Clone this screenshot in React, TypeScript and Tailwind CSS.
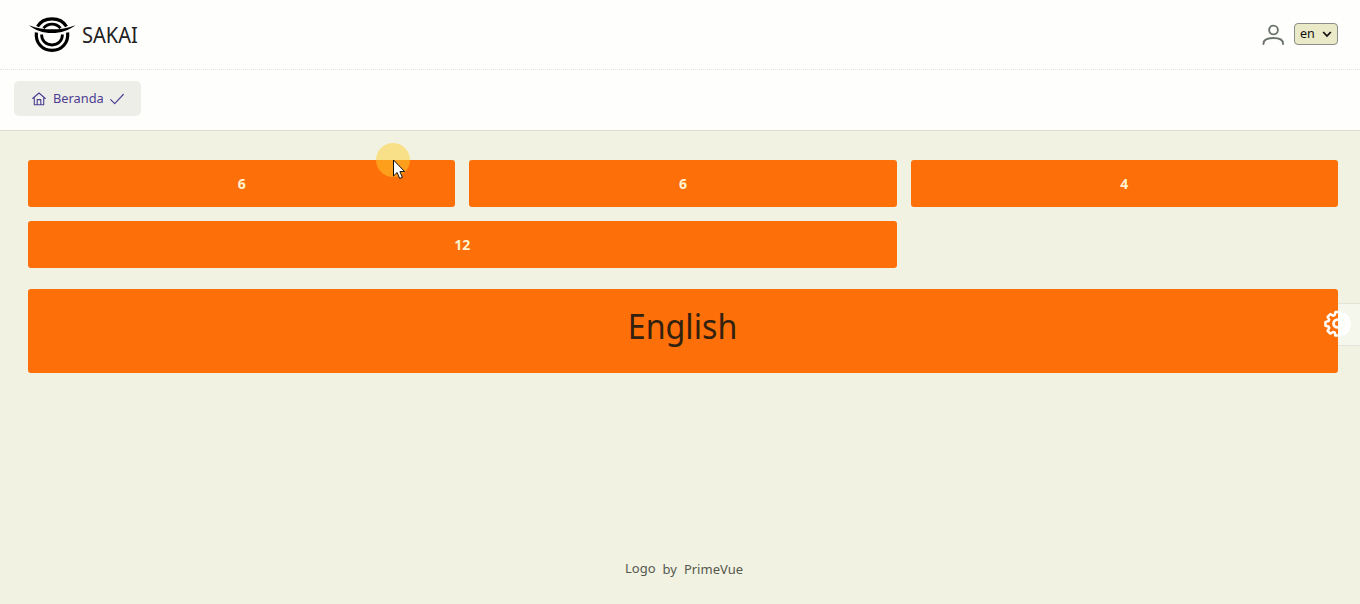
import React from "react";

const Logo = () => (
  <svg width="47" height="36" viewBox="0 0 47 36" fill="none" stroke="#000" className="shrink-0">
    <path d="M8.500 9.500C11.300 4.700 16.700 1.800 23 1.800S34.700 4.700 37.500 9.500" strokeWidth="3.200" />
    <path d="M14.500 11.200C16.800 8.500 19.700 7.200 23 7.200s6.200 1.300 8.500 4" strokeWidth="2.800" />
    <path d="M7.400 15.500C6.200 25.800 13.200 33.400 23 33.400s16.800-7.600 15.600-17.900" strokeWidth="3.200" />
    <path d="M12.600 17.500C12.500 23.800 17 28 23 28s10.500-4.200 10.400-10.500" strokeWidth="2.800" />
    <path d="M0 8.200C8 11.200 15 12.300 23 12.300s15-1.100 23.500-4.100C40 13.200 32 16.100 23 16.100S6 13.200 0 8.200Z" fill="#000" stroke="none" />
  </svg>
);

const UserIcon = () => (
  <svg width="22" height="22" viewBox="0 0 22 22" fill="none" stroke="#6c756d" strokeWidth="1.900" strokeLinecap="round">
    <circle cx="11.500" cy="6" r="4.400" />
    <path d="M1.500 20v-.5C1.500 15.800 5.300 14 11.500 14s9.500 1.800 9.500 5.500v.5" />
  </svg>
);

const HomeIcon = () => (
  <svg width="14" height="14" viewBox="0 0 14 14" fill="none" stroke="#4b3d91" strokeWidth="1.100" strokeLinecap="round" strokeLinejoin="round">
    <path d="M.7 6.500 7 1l6.300 5.500M2.300 5.500v7.300h9.400V5.500M5.200 12.500V7.600h3.600v4.900" />
  </svg>
);

const CheckIcon = () => (
  <svg width="14" height="14" viewBox="0 0 14 14" fill="none" stroke="#4b3d91" strokeWidth="1.200" strokeLinecap="round" strokeLinejoin="round">
    <path d="m.7 7.600 4 4L13.300 2.500" />
  </svg>
);

const CogIcon = () => (
  <svg width="27" height="27" viewBox="0 0 24 24" fill="none" stroke="#fff" strokeWidth="2.500" strokeLinejoin="round">
    <path d="M10 1.500h4l.7 3 1.600.7 2.700-1.600 2.800 2.800-1.600 2.700.7 1.600 3 .7v4l-3 .7-.7 1.600 1.600 2.700-2.800 2.800-2.700-1.600-1.600.7-.7 3h-4l-.7-3-1.600-.7L5 23.200l-2.800-2.800 1.600-2.700-.7-1.600-3-.7v-4l3-.7.7-1.600L2.200 6.400 5 3.600l2.700 1.600 1.600-.7Z" transform="translate(1.200 .5) scale(.9 .88)" />
    <circle cx="12" cy="12" r="3.500" />
  </svg>
);

const tile = "flex h-[47px] items-center justify-center rounded-[3px] bg-[#fd6f08] text-[14px] font-bold text-[#fff3d0]";

export default function App() {
  return (
    <div className="relative flex h-[604px] w-full flex-col overflow-hidden bg-[#f1f2e2] font-['Noto_Sans','Open_Sans',sans-serif] text-[#55584f]">
      <header className="flex h-[70px] shrink-0 items-center justify-between border-b border-dotted border-[#dfe2e0] bg-[#fefefc] pr-[22px] pl-[29px]">
        <div className="flex items-center gap-[6px]">
          <Logo />
          <span className="mt-px origin-left scale-x-[0.955] text-[21px] leading-[30px] text-[#222]">SAKAI</span>
        </div>
        <div className="flex items-center gap-[10px]">
          <UserIcon />
          <button className="mb-[2px] flex h-[22px] w-[44px] items-center justify-between rounded-[4px] border border-[#8b8c8c] bg-[#eaeac8] px-[5px] text-[12.500px] text-[#111]">
            <span className="pt-[2px] leading-none">en</span>
            <svg width="10" height="8" viewBox="0 0 10 8" fill="none" stroke="#111" strokeWidth="1.800">
              <path d="m1.200 2 3.800 4L8.800 2" />
            </svg>
          </button>
        </div>
      </header>

      <nav className="flex h-[61px] shrink-0 items-start border-b border-[#d9dccc] bg-[#fefefc] pt-[11px] pl-[14px]">
        <a className="flex h-[35px] w-[127px] items-center rounded-[5px] bg-[#eeeee8] pl-[18px] text-[13px] text-[#4b3d91]">
          <HomeIcon />
          <span className="ml-[7px] w-[50px] pt-px whitespace-nowrap"><span className="inline-block origin-left scale-x-[0.985]">Beranda</span></span>
          <span className="ml-[7px]"><CheckIcon /></span>
        </a>
      </nav>

      <main className="flex flex-1 flex-col pt-[29px] pr-[22px] pl-[28px]">
        <div className="grid grid-cols-3 gap-[14px]">
          <div className={tile}>6</div>
          <div className={tile}>6</div>
          <div className={tile}>4</div>
          <div className={`${tile} col-span-2`}>12</div>
        </div>
        <div className="mt-[21px] flex h-[84px] items-center justify-center rounded-[3px] bg-[#fd6f08] pb-[10px] text-[35px] text-[#33210f]">
          <span className="scale-x-[0.920]">English</span>
        </div>
      </main>

      <footer className="flex h-[70px] shrink-0 items-center justify-center gap-[7px] pt-px pl-[8px] text-[13px]">
        <span className="-mt-[2px]">Logo</span>
        <span>by</span>
        <span>PrimeVue</span>
      </footer>

      <div className="absolute top-[303px] right-0 h-[43px] w-[22px] border-y border-[#e2e6d8] bg-[#f5f7ec]" />
      <div className="absolute top-[311px] left-[1338px] h-[26px] w-[13px] rounded-r-full bg-white/70" />
      <div className="absolute top-[310px] left-[1324px]">
        <CogIcon />
      </div>
      <div className="absolute top-[143px] left-[376px] size-[34px] rounded-full bg-[#ffcf2e]/50" />
      <svg className="absolute top-[159px] left-[392px]" width="14" height="21" viewBox="0 0 14 21" fill="#fff" stroke="#111" strokeWidth="1">
        <path d="M1.500 1v16l3.600-3.500 2.600 6 2.700-1.200-2.500-5.700h4.800Z" />
      </svg>
    </div>
  );
}
